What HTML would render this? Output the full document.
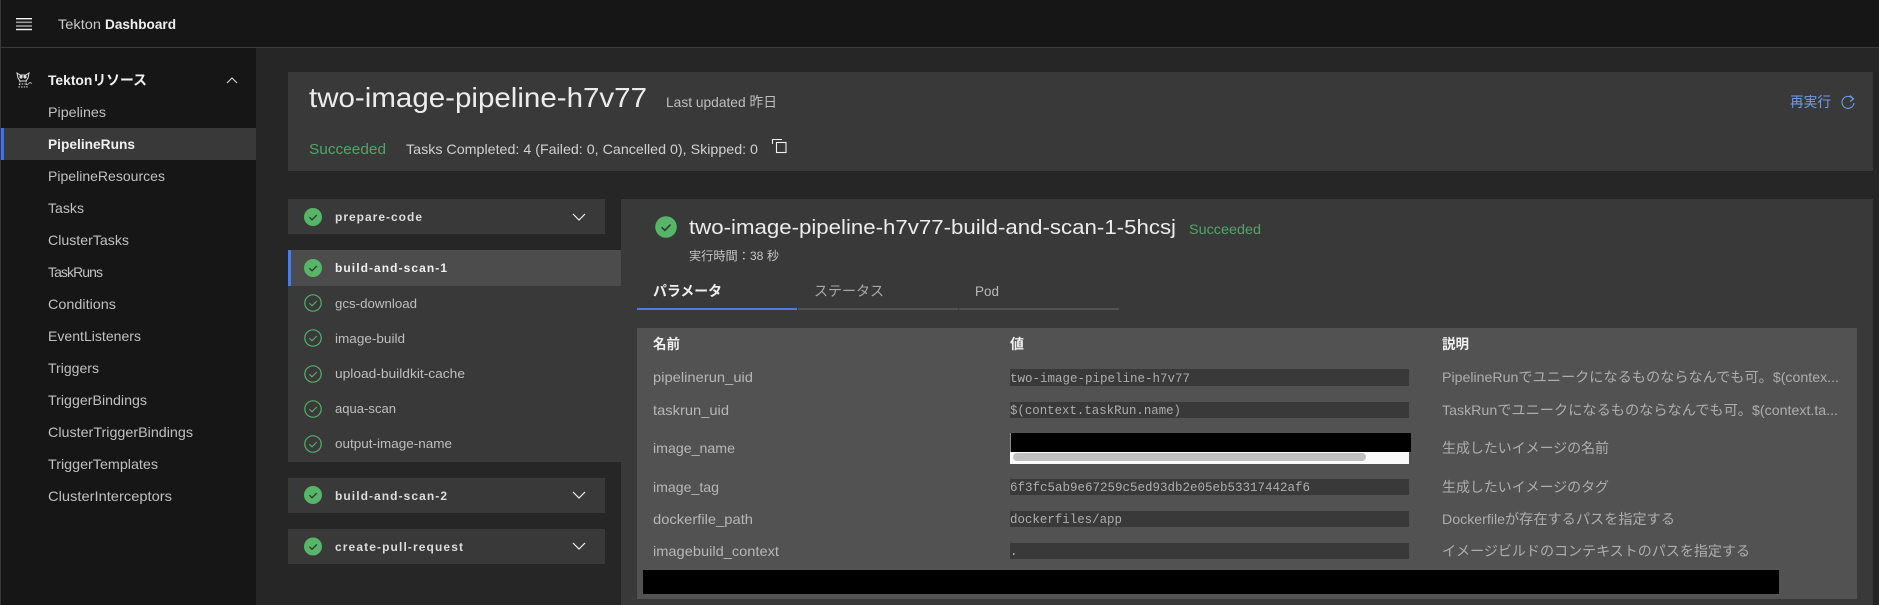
<!DOCTYPE html>
<html lang="ja">
<head>
<meta charset="utf-8">
<title>Tekton Dashboard</title>
<style>
html,body{margin:0;padding:0;width:1879px;height:605px;overflow:hidden;background:#262626}
svg{display:block}
text{font-family:"Liberation Sans","Noto Sans CJK JP",sans-serif;font-size:14px;fill:#c6c6c6;white-space:pre}
.nav{fill:#c0c0c0}
.b{font-weight:700;fill:#f0f0f0}
.task{font-size:12px;font-weight:700;fill:#dcdcdc}
.step{font-size:12.5px;fill:#bebebe}
.g{fill:#52a568}
.n{fill:#b6b6b6}
.d{fill:#adadad}
.m{font-family:"Liberation Mono",monospace;font-size:12.5px;fill:#adadad}
</style>
</head>
<body>
<svg width="1879" height="605" viewBox="0 0 1879 605" xmlns="http://www.w3.org/2000/svg">
<defs>
<g id="fc"><circle r="9" fill="#56b567"/><path d="M-3.6 0.2L-1 2.8L3.8 -2" fill="none" stroke="#2f3a32" stroke-width="1.3"/></g>
<g id="oc"><circle r="8.2" fill="none" stroke="#56ad6c" stroke-width="1.2"/><path d="M-3.6 0.2L-1 2.8L3.8 -2" fill="none" stroke="#56ad6c" stroke-width="1.1"/></g>
<path id="cv" d="M-6 -3L0 3L6 -3" fill="none" stroke="#f0f0f0" stroke-width="1.2"/>
</defs>

<!-- backgrounds -->
<rect width="1879" height="605" fill="#262626"/>
<rect width="1879" height="47" fill="#161616"/>
<rect y="47" width="1879" height="1" fill="#393939"/>
<rect y="48" width="256" height="557" fill="#161616"/>
<rect width="1" height="605" fill="#3a3a3a"/>

<!-- header -->
<rect x="16" y="18" width="16" height="1.4" fill="#f4f4f4"/>
<rect x="16" y="21.5" width="16" height="1.6" fill="#9a9a9a"/>
<rect x="16" y="25.2" width="16" height="1.6" fill="#9a9a9a"/>
<rect x="16" y="28.8" width="16" height="1.4" fill="#f4f4f4"/>
<text x="58" y="29" textLength="43" lengthAdjust="spacingAndGlyphs" style="fill:#c8c8c8">Tekton</text>
<text x="105" y="29" textLength="71" lengthAdjust="spacingAndGlyphs" class="b">Dashboard</text>

<!-- sidebar -->
<g fill="none" stroke="#dcdcdc" stroke-width="1">
<path d="M17 73L20 75H26L29 73L28 78L26 81H20L18 78Z"/>
<circle cx="21" cy="77" r="1.1" fill="#dcdcdc"/><circle cx="25" cy="77" r="1.1" fill="#dcdcdc"/>
<path d="M20 81L19 87H27L26 81" stroke-dasharray="1.5 1.2"/>
<path d="M19 84H27" stroke-dasharray="1.5 1.2"/>
<path d="M27 85L30 82.5L32 83.5" stroke="#a0a0a0"/>
</g>
<text x="48" y="85" textLength="99" lengthAdjust="spacingAndGlyphs" class="b">Tektonリソース</text>
<path d="M227 83L232 78L237 83" fill="none" stroke="#d8d8d8" stroke-width="1.1"/>
<rect x="1" y="128" width="255" height="32" fill="#393939"/>
<rect x="1" y="128" width="3" height="32" fill="#3f72ee"/>
<text class="nav" x="48" y="117" textLength="58" lengthAdjust="spacingAndGlyphs">Pipelines</text>
<text class="b" x="48" y="149" textLength="87" lengthAdjust="spacingAndGlyphs">PipelineRuns</text>
<text class="nav" x="48" y="181" textLength="117" lengthAdjust="spacingAndGlyphs">PipelineResources</text>
<text class="nav" x="48" y="213" textLength="36" lengthAdjust="spacingAndGlyphs">Tasks</text>
<text class="nav" x="48" y="245" textLength="81" lengthAdjust="spacingAndGlyphs">ClusterTasks</text>
<text class="nav" x="48" y="277" textLength="55" lengthAdjust="spacing">TaskRuns</text>
<text class="nav" x="48" y="309" textLength="68" lengthAdjust="spacingAndGlyphs">Conditions</text>
<text class="nav" x="48" y="341" textLength="93" lengthAdjust="spacingAndGlyphs">EventListeners</text>
<text class="nav" x="48" y="373" textLength="51" lengthAdjust="spacingAndGlyphs">Triggers</text>
<text class="nav" x="48" y="405" textLength="99" lengthAdjust="spacingAndGlyphs">TriggerBindings</text>
<text class="nav" x="48" y="437" textLength="145" lengthAdjust="spacingAndGlyphs">ClusterTriggerBindings</text>
<text class="nav" x="48" y="469" textLength="110" lengthAdjust="spacingAndGlyphs">TriggerTemplates</text>
<text class="nav" x="48" y="501" textLength="124" lengthAdjust="spacingAndGlyphs">ClusterInterceptors</text>

<!-- run header -->
<rect x="288" y="72" width="1585" height="99" fill="#393939"/>
<text x="309" y="107" textLength="338" lengthAdjust="spacingAndGlyphs" style="font-size:28px;fill:#ececec">two-image-pipeline-h7v77</text>
<text x="666" y="107" textLength="111" lengthAdjust="spacingAndGlyphs" style="fill:#bebebe">Last updated 昨日</text>
<text class="g" x="309" y="154" textLength="77" lengthAdjust="spacingAndGlyphs" style="font-size:15px">Succeeded</text>
<text x="406" y="154" textLength="352" lengthAdjust="spacingAndGlyphs" style="fill:#d0d0d0">Tasks Completed: 4 (Failed: 0, Cancelled 0), Skipped: 0</text>
<g fill="none" stroke="#f0f0f0" stroke-width="1.1">
<rect x="776.5" y="142.5" width="9.5" height="10"/>
<path d="M772.5 144V139.5H782"/>
</g>
<text x="1790" y="107" textLength="41" lengthAdjust="spacingAndGlyphs" style="fill:#6f9ce8">再実行</text>
<path d="M1853 99A6 6 0 1 0 1854 103M1850 95.5L1853.6 98.9L1850 101.5" fill="none" stroke="#6f9ce8" stroke-width="1.1"/>

<!-- task list -->
<rect x="288" y="199" width="317" height="35" fill="#393939"/>
<use href="#fc" x="313" y="217"/>
<text class="task" x="335" y="221" textLength="87" lengthAdjust="spacing">prepare-code</text>
<use href="#cv" x="579" y="217"/>

<rect x="288" y="250" width="333" height="212" fill="#393939"/>
<rect x="288" y="250" width="333" height="36" fill="#4c4c4c"/>
<rect x="288" y="250" width="3" height="36" fill="#4b7be8"/>
<use href="#fc" x="313" y="268"/>
<text class="task" x="335" y="272" textLength="112" lengthAdjust="spacing" style="fill:#f0f0f0">build-and-scan-1</text>
<use href="#oc" x="313" y="303"/>
<text class="step" x="335" y="308" textLength="82" lengthAdjust="spacingAndGlyphs">gcs-download</text>
<use href="#oc" x="313" y="338"/>
<text class="step" x="335" y="343" textLength="70" lengthAdjust="spacingAndGlyphs">image-build</text>
<use href="#oc" x="313" y="374"/>
<text class="step" x="335" y="378" textLength="130" lengthAdjust="spacingAndGlyphs">upload-buildkit-cache</text>
<use href="#oc" x="313" y="409"/>
<text class="step" x="335" y="413" textLength="61" lengthAdjust="spacingAndGlyphs">aqua-scan</text>
<use href="#oc" x="313" y="444"/>
<text class="step" x="335" y="448" textLength="117" lengthAdjust="spacingAndGlyphs">output-image-name</text>

<rect x="288" y="478" width="317" height="35" fill="#393939"/>
<use href="#fc" x="313" y="495"/>
<text class="task" x="335" y="500" textLength="112" lengthAdjust="spacing">build-and-scan-2</text>
<use href="#cv" x="579" y="495"/>
<rect x="288" y="529" width="317" height="35" fill="#393939"/>
<use href="#fc" x="313" y="546.5"/>
<text class="task" x="335" y="551" textLength="128" lengthAdjust="spacing">create-pull-request</text>
<use href="#cv" x="579" y="546"/>

<!-- detail -->
<rect x="621" y="199" width="1252" height="406" fill="#393939"/>
<g transform="translate(666 227) scale(1.2)"><use href="#fc"/></g>
<text x="689" y="234" textLength="487" lengthAdjust="spacingAndGlyphs" style="font-size:20px;fill:#ececec">two-image-pipeline-h7v77-build-and-scan-1-5hcsj</text>
<text class="g" x="1189" y="234" textLength="72" lengthAdjust="spacingAndGlyphs">Succeeded</text>
<text x="689" y="260" textLength="90" lengthAdjust="spacingAndGlyphs" style="font-size:12px">実行時間：38 秒</text>

<text class="b" x="653" y="296" textLength="69" lengthAdjust="spacingAndGlyphs">パラメータ</text>
<text x="814" y="296" textLength="70" lengthAdjust="spacingAndGlyphs" style="fill:#a8a8a8">ステータス</text>
<text x="975" y="296" textLength="24" lengthAdjust="spacingAndGlyphs" style="fill:#b8b8b8">Pod</text>
<rect x="637" y="308" width="160" height="2" fill="#4b7be8"/>
<rect x="798" y="308" width="160" height="2" fill="#525252"/>
<rect x="959" y="308" width="160" height="2" fill="#525252"/>

<!-- table -->
<rect x="637" y="328" width="1220" height="271" fill="#525252"/>
<text class="b" x="653" y="349" textLength="27" lengthAdjust="spacingAndGlyphs">名前</text>
<text class="b" x="1010" y="349" textLength="14" lengthAdjust="spacingAndGlyphs">値</text>
<text class="b" x="1442" y="349" textLength="27" lengthAdjust="spacingAndGlyphs">説明</text>

<text class="n" x="653" y="382" textLength="100" lengthAdjust="spacingAndGlyphs">pipelinerun_uid</text>
<rect x="1010" y="369" width="399" height="17" fill="#393939"/>
<text class="m" x="1010" y="382" textLength="180" lengthAdjust="spacingAndGlyphs">two-image-pipeline-h7v77</text>
<text class="d" x="1442" y="382" textLength="397" lengthAdjust="spacingAndGlyphs">PipelineRunでユニークになるものならなんでも可。$(contex...</text>

<text class="n" x="653" y="415" textLength="76" lengthAdjust="spacingAndGlyphs">taskrun_uid</text>
<rect x="1010" y="402" width="399" height="16" fill="#393939"/>
<text class="m" x="1010" y="414" textLength="171" lengthAdjust="spacingAndGlyphs">$(context.taskRun.name)</text>
<text class="d" x="1442" y="415" textLength="396" lengthAdjust="spacingAndGlyphs">TaskRunでユニークになるものならなんでも可。$(context.ta...</text>

<text class="n" x="653" y="453" textLength="82" lengthAdjust="spacingAndGlyphs">image_name</text>
<rect x="1010" y="433" width="1" height="19" fill="#8a8a8a"/>
<rect x="1010" y="452" width="399" height="12" fill="#fafafa"/>
<rect x="1011" y="433" width="400" height="19" fill="#000"/>
<rect x="1013" y="453" width="353" height="8" rx="4" fill="#c1c1c1"/>
<text class="d" x="1442" y="453" textLength="167" lengthAdjust="spacingAndGlyphs">生成したいイメージの名前</text>

<text class="n" x="653" y="492" textLength="66" lengthAdjust="spacingAndGlyphs">image_tag</text>
<rect x="1010" y="479" width="399" height="16" fill="#393939"/>
<text class="m" x="1010" y="491" textLength="300" lengthAdjust="spacingAndGlyphs">6f3fc5ab9e67259c5ed93db2e05eb53317442af6</text>
<text class="d" x="1442" y="492" textLength="167" lengthAdjust="spacingAndGlyphs">生成したいイメージのタグ</text>

<text class="n" x="653" y="524" textLength="100" lengthAdjust="spacingAndGlyphs">dockerfile_path</text>
<rect x="1010" y="511" width="399" height="16" fill="#393939"/>
<text class="m" x="1010" y="523" textLength="112" lengthAdjust="spacingAndGlyphs">dockerfiles/app</text>
<text class="d" x="1442" y="524" textLength="233" lengthAdjust="spacingAndGlyphs">Dockerfileが存在するパスを指定する</text>

<text class="n" x="653" y="556" textLength="126" lengthAdjust="spacingAndGlyphs">imagebuild_context</text>
<rect x="1010" y="543" width="399" height="16" fill="#393939"/>
<text class="m" x="1010" y="555">.</text>
<text class="d" x="1442" y="556" textLength="308" lengthAdjust="spacingAndGlyphs">イメージビルドのコンテキストのパスを指定する</text>

<rect x="643" y="570" width="1136" height="24" fill="#000"/>
</svg>
</body>
</html>
